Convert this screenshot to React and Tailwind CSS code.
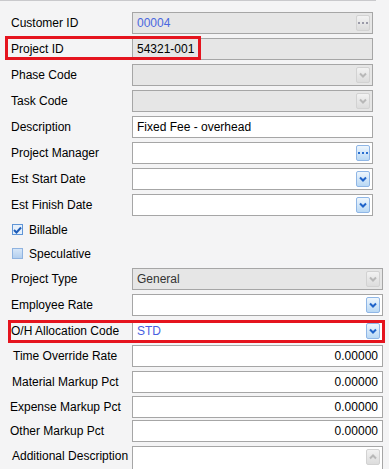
import React from 'react';

const Chevron = ({ disabled }) => (
  <svg width="8" height="6" viewBox="0 0 8 6">
    <path d="M1 1.5 L4 4.5 L7 1.5" fill="none" stroke={disabled ? '#b8b8b8' : '#1f63c9'} strokeWidth="2" />
  </svg>
);

const Dots = ({ disabled }) => (
  <svg width="10" height="3" viewBox="0 0 10 3">
    {[0, 4, 8].map(x => (
      <rect key={x} x={x} y="0" width="2" height="2" fill={disabled ? '#9a9aa8' : '#2a6fd0'} />
    ))}
  </svg>
);

const SideButton = ({ kind, disabled }) => (
  <div
    className={`w-[14px] h-[16px] rounded-[2px] border flex items-center justify-center ${
      disabled
        ? 'border-[#d2d2d2] bg-gradient-to-b from-[#f2f2f2] to-[#dcdcdc]'
        : 'border-[#8fb6e6] bg-gradient-to-b from-[#eef6fd] to-[#b9d8f4]'
    }`}
  >
    {kind === 'dots' ? <Dots disabled={disabled} /> : <Chevron disabled={disabled} />}
  </div>
);

const Field = ({ value, disabled, button, align = 'left', color = 'text-black', wide }) => (
  <div
    className={`h-[22px] flex items-center border border-[#a6a6a6] ${wide ? 'w-[251px]' : 'w-[241px]'} ${
      disabled ? 'bg-[#e6e6e6]' : 'bg-white'
    }`}
  >
    <span className={`flex-1 px-[4px] text-[12px] ${color} ${align === 'right' ? 'text-right' : ''}`}>{value}</span>
    {button && (
      <div className="pr-[2px]">
        <SideButton kind={button} disabled={disabled} />
      </div>
    )}
  </div>
);

const Row = ({ label, h = 'h-[26px]', labelPad = 'pl-[11px]', children }) => (
  <div className={`flex items-center ${h}`}>
    <div className={`w-[132px] ${labelPad} text-[12px] text-black whitespace-nowrap`}>{label}</div>
    {children}
  </div>
);

const CheckRow = ({ label, checked, h }) => (
  <div className={`flex items-center ${h} pl-[12px] gap-[6px]`}>
    <div
      className={`w-[11px] h-[11px] border flex items-center justify-center ${
        checked ? 'border-[#5f95d6] bg-[#e6f0fb]' : 'border-[#8fb3e0] bg-gradient-to-b from-[#d6e6f8] to-[#b3cfee]'
      }`}
    >
      {checked && (
        <svg width="9" height="8" viewBox="0 0 9 8">
          <path d="M1 4 L3.5 6.5 L8 1.5" fill="none" stroke="#1d5cb8" strokeWidth="2" />
        </svg>
      )}
    </div>
    <span className="text-[12px] text-black">{label}</span>
  </div>
);

export default function App() {
  return (
    <div
      className="w-[389px] h-[469px] overflow-hidden bg-[#f4f4f5]"
      style={{ fontFamily: '"Liberation Sans", Arial, sans-serif' }}
    >
      <div className="w-[376px] h-[1px] bg-[#c9c9cc]" />
      <div className="pt-[9px]">
        <Row label="Customer ID">
          <Field value="00004" disabled button="dots" color="text-[#4a67e0]" />
        </Row>
        <div className="relative">
          <Row label="Project ID">
            <Field value="54321-001" disabled />
          </Row>
          <div className="absolute left-[5px] top-0 w-[196px] h-[24px] border-[3px] border-[#e5141e]" />
        </div>
        <Row label="Phase Code">
          <Field disabled button="chev" />
        </Row>
        <Row label="Task Code">
          <Field disabled button="chev" />
        </Row>
        <Row label="Description">
          <Field value="Fixed Fee - overhead" />
        </Row>
        <Row label="Project Manager">
          <Field button="dots" />
        </Row>
        <Row label="Est Start Date">
          <Field button="chev" />
        </Row>
        <Row label="Est Finish Date">
          <Field button="chev" />
        </Row>
        <CheckRow label="Billable" checked h="h-[23px]" />
        <CheckRow label="Speculative" h="h-[25px]" />
        <Row label="Project Type">
          <Field value="General" disabled wide button="chev" color="text-[#333]" />
        </Row>
        <Row label="Employee Rate">
          <Field wide button="chev" />
        </Row>
        <div className="relative">
          <Row label="O/H Allocation Code" h="h-[25px]">
            <Field value="STD" wide button="chev" color="text-[#4a5fe0]" />
          </Row>
          <div className="absolute left-[8px] top-[2px] w-[377px] h-[23px] border-[3px] border-[#e5141e] pointer-events-none" />
        </div>
        <Row label="Time Override Rate" labelPad="pl-[13px]">
          <Field value="0.00000" wide align="right" />
        </Row>
        <Row label="Material Markup Pct" labelPad="pl-[12px]">
          <Field value="0.00000" wide align="right" />
        </Row>
        <Row label="Expense Markup Pct" h="h-[24px]" labelPad="pl-[10px]">
          <Field value="0.00000" wide align="right" />
        </Row>
        <Row label="Other Markup Pct" h="h-[24px]" labelPad="pl-[10px]">
          <Field value="0.00000" wide align="right" />
        </Row>
        <div className="flex items-start pt-[3px]">
          <div className="w-[132px] pl-[12px] text-[12px] text-black whitespace-nowrap pt-[1px]">Additional Description</div>
          <div className="w-[251px] h-[40px] border border-[#a6a6a6] bg-white flex justify-end pt-[2px] pr-[2px]">
            <div className="w-[14px] h-[16px] rounded-[2px] border border-[#d2d2d2] bg-gradient-to-b from-[#f2f2f2] to-[#dcdcdc] flex items-center justify-center">
              <svg width="8" height="6" viewBox="0 0 8 6">
                <path d="M1 4.5 L4 1.5 L7 4.5" fill="none" stroke="#b8b8b8" strokeWidth="2" />
              </svg>
            </div>
          </div>
        </div>
      </div>
    </div>
  );
}
